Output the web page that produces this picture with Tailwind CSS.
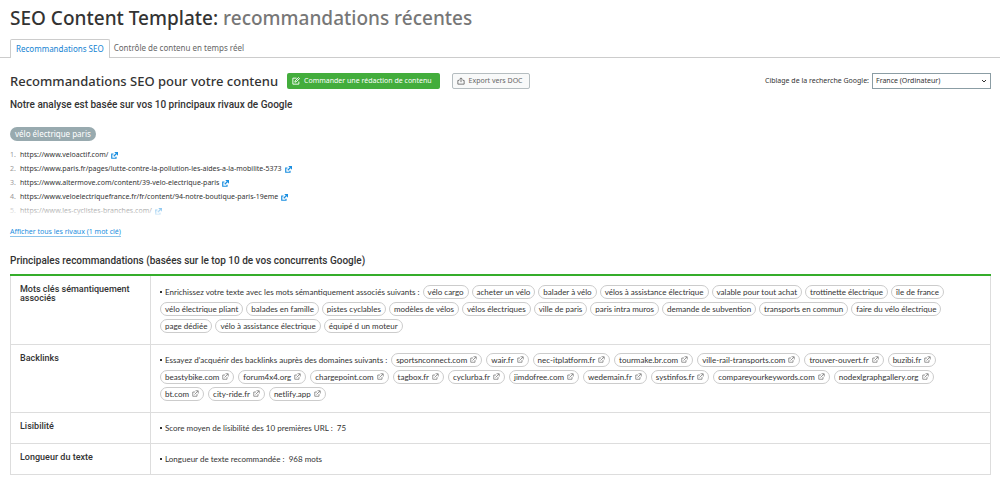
<!DOCTYPE html>
<html lang="fr">
<head>
    <meta charset="UTF-8">
    <meta name="viewport" content="width=device-width, initial-scale=1.0">
    <title>SEO Content Template</title>
    <script src="https://cdn.jsdelivr.net/npm/@tailwindcss/browser@4"></script>
</head>
<body class="bg-white text-[#333] font-['Noto_Sans','Open_Sans',sans-serif] text-[8px] leading-[14px]">
    <!-- Shared icons -->
    <svg class="hidden">
        <symbol id="external" viewBox="0 0 14 14">
            <path d="M6 4H1.5v8.5H10V8M5 9l7-7M7 1.5h5.5V7" fill="none" stroke="currentColor" stroke-width="1.5"/>
        </symbol>
        <symbol id="external-bold" viewBox="0 0 14 14">
            <path d="M5 4H1.5v8.5H10V9.5M5.5 8.5l5-5" fill="none" stroke="currentColor" stroke-width="2.4"/>
            <path d="M6.5 0H14v7.5z" fill="currentColor"/>
        </symbol>
    </svg>

    <header>
        <h1 class="px-[10px] pt-[6px] text-[19px] leading-[24px] font-medium">SEO Content Template: <span class="text-[#777]">recommandations récentes</span></h1>
        <nav class="mt-[9px] flex border-b border-[#ccc] pl-[10px] leading-[17px]">
            <a href="#" class="-mb-px rounded-t-xs border border-b-0 border-[#ccc] bg-white px-[5px] pb-px text-[#1483d2]">Recommandations SEO</a>
            <a href="#" class="px-1 text-[#666]">Contrôle de contenu en temps réel</a>
        </nav>
    </header>

    <main class="px-[10px] pr-[9px] pt-[15px]">
        <div class="flex items-center">
            <h2 class="text-[13px] leading-[16px] font-medium">Recommandations SEO pour votre contenu</h2>
            <button type="button" class="ml-[9px] flex h-4 items-center gap-1 rounded-xs bg-[#43ad3c] pl-[5px] pr-2 text-[7px] text-white">
                <svg class="size-2" viewBox="0 0 14 14" fill="none" stroke="currentColor" stroke-width="1.6">
                    <path d="M8 2H1.5v10.5H12V8"/>
                    <path d="M5 9l.6-2.4L11.5 1l1.7 1.7-5.8 5.8z"/>
                </svg>
                Commander une rédaction de contenu
            </button>
            <button type="button" class="ml-3 flex h-4 items-center gap-1 rounded-xs border border-[#b5bdc0] bg-[#f8f9f9] px-1 pr-[6px] text-[7px] text-[#666]">
                <svg class="size-2" viewBox="0 0 14 14" fill="none" stroke="currentColor" stroke-width="1.5">
                    <path d="M4 6H1.5v6.5h11V6H10M7 9V2M4 4.5l3-3 3 3"/>
                </svg>
                Export vers DOC
            </button>
            <label for="target" class="ml-auto text-[7px]">Ciblage de la recherche Google:</label>
            <div class="relative ml-[3px]">
                <select id="target" class="block h-4 w-[119px] appearance-none border border-[#8b9da4] bg-white pl-[3px] text-[7px]">
                    <option>France (Ordinateur)</option>
                </select>
                <svg class="pointer-events-none absolute right-[5px] top-[6px] size-1" viewBox="0 0 8 8" fill="none" stroke="currentColor" stroke-width="2">
                    <path d="M0 2l4 4 4-4"/>
                </svg>
            </div>
        </div>

        <h3 class="mt-[9px] font-[Roboto,sans-serif] text-[10px] font-medium">Notre analyse est basée sur vos 10 principaux rivaux de Google</h3>
        <span class="mt-[15px] inline-block h-[14px] rounded-full bg-[#98aaaf] px-[5px] leading-[13px] text-white">vélo électrique paris</span>

        <div class="relative mt-[7px]">
            <ol class="text-[7px]">
                <li class="flex"><span class="w-[10px] text-[#999]">1.</span><a href="#" class="flex items-center gap-[3px]">https://www.veloactif.com/ <svg class="size-[7px] text-[#1a8ee0]"><use href="#external-bold"/></svg></a></li>
                <li class="flex"><span class="w-[10px] text-[#999]">2.</span><a href="#" class="flex items-center gap-[3px]">https://www.paris.fr/pages/lutte-contre-la-pollution-les-aides-a-la-mobilite-5373 <svg class="size-[7px] text-[#1a8ee0]"><use href="#external-bold"/></svg></a></li>
                <li class="flex"><span class="w-[10px] text-[#999]">3.</span><a href="#" class="flex items-center gap-[3px]">https://www.altermove.com/content/39-velo-electrique-paris <svg class="size-[7px] text-[#1a8ee0]"><use href="#external-bold"/></svg></a></li>
                <li class="flex"><span class="w-[10px] text-[#999]">4.</span><a href="#" class="flex items-center gap-[3px]">https://www.veloelectriquefrance.fr/fr/content/94-notre-boutique-paris-19eme <svg class="size-[7px] text-[#1a8ee0]"><use href="#external-bold"/></svg></a></li>
                <li class="flex"><span class="w-[10px] text-[#999]">5.</span><a href="#" class="flex items-center gap-[3px]">https://www.les-cyclistes-branches.com/ <svg class="size-[7px] text-[#1a8ee0]"><use href="#external-bold"/></svg></a></li>
            </ol>
            <!-- Fade over the last rival -->
            <div class="pointer-events-none absolute inset-x-0 bottom-0 h-4 bg-linear-to-b from-white/20 to-white"></div>
        </div>
        <a href="#" class="mt-[9px] inline-block border-b border-[#8cc4ea] text-[7px] leading-[9px] text-[#1a8ee0]">Afficher tous les rivaux (1 mot clé)</a>

        <h3 class="mt-4 font-[Roboto,sans-serif] text-[10px] font-medium">Principales recommandations (basées sur le top 10 de vos concurrents Google)</h3>
        <table class="mt-[6px] w-full border-collapse border border-t-2 border-[#ddd] border-t-[#35ad2b] text-left align-top">
            <tr class="h-[69px] border-b border-[#ddd]">
                <th class="w-[140px] border-r border-[#ddd] px-[9px] pt-[9px] align-top font-[Roboto,sans-serif] text-[9px] leading-[9px] font-medium">Mots clés sémantiquement associés</th>
                <td class="pt-[9px] pl-[9px] pr-4 align-top font-[Lato,'Noto_Sans',sans-serif]">
                    <ul class="flex flex-wrap gap-x-[3px] gap-y-[3px]">
                        <li class="flex items-center gap-[3px]"><span class="size-[2px] bg-[#333]"></span>Enrichissez votre texte avec les mots sémantiquement associés suivants :</li>
                        <li class="rounded-full border border-[#ccc] px-1 leading-[12px]">vélo cargo</li>
                        <li class="rounded-full border border-[#ccc] px-1 leading-[12px]">acheter un vélo</li>
                        <li class="rounded-full border border-[#ccc] px-1 leading-[12px]">balader à vélo</li>
                        <li class="rounded-full border border-[#ccc] px-1 leading-[12px]">vélos à assistance électrique</li>
                        <li class="rounded-full border border-[#ccc] px-1 leading-[12px]">valable pour tout achat</li>
                        <li class="rounded-full border border-[#ccc] px-1 leading-[12px]">trottinette électrique</li>
                        <li class="rounded-full border border-[#ccc] px-1 leading-[12px]">île de france</li>
                        <li class="rounded-full border border-[#ccc] px-1 leading-[12px]">vélo électrique pliant</li>
                        <li class="rounded-full border border-[#ccc] px-1 leading-[12px]">balades en famille</li>
                        <li class="rounded-full border border-[#ccc] px-1 leading-[12px]">pistes cyclables</li>
                        <li class="rounded-full border border-[#ccc] px-1 leading-[12px]">modèles de vélos</li>
                        <li class="rounded-full border border-[#ccc] px-1 leading-[12px]">vélos électriques</li>
                        <li class="rounded-full border border-[#ccc] px-1 leading-[12px]">ville de paris</li>
                        <li class="rounded-full border border-[#ccc] px-1 leading-[12px]">paris intra muros</li>
                        <li class="rounded-full border border-[#ccc] px-1 leading-[12px]">demande de subvention</li>
                        <li class="rounded-full border border-[#ccc] px-1 leading-[12px]">transports en commun</li>
                        <li class="rounded-full border border-[#ccc] px-1 leading-[12px]">faire du vélo électrique</li>
                        <li class="rounded-full border border-[#ccc] px-1 leading-[12px]">page dédiée</li>
                        <li class="rounded-full border border-[#ccc] px-1 leading-[12px]">vélo à assistance électrique</li>
                        <li class="rounded-full border border-[#ccc] px-1 leading-[12px]">équipé d un moteur</li>
                    </ul>
                </td>
            </tr>
            <tr class="h-[68px] border-b border-[#ddd]">
                <th class="border-r border-[#ddd] px-[9px] pt-[8px] align-top font-[Roboto,sans-serif] text-[9px] leading-[11px] font-medium">Backlinks</th>
                <td class="py-[8px] pl-[9px] pr-4 align-top font-[Lato,'Noto_Sans',sans-serif]">
                    <ul class="flex flex-wrap gap-x-1 gap-y-[3px]">
                        <li class="flex items-center gap-[3px]"><span class="size-[2px] bg-[#333]"></span>Essayez d'acquérir des backlinks auprès des domaines suivants :</li>
                        <li><a href="#" class="flex items-center gap-[3px] rounded-full border border-[#ccc] px-1 leading-[12px]">sportsnconnect.com <svg class="size-[7px] text-[#777]"><use href="#external"/></svg></a></li>
                        <li><a href="#" class="flex items-center gap-[3px] rounded-full border border-[#ccc] px-1 leading-[12px]">wair.fr <svg class="size-[7px] text-[#777]"><use href="#external"/></svg></a></li>
                        <li><a href="#" class="flex items-center gap-[3px] rounded-full border border-[#ccc] px-1 leading-[12px]">nec-itplatform.fr <svg class="size-[7px] text-[#777]"><use href="#external"/></svg></a></li>
                        <li><a href="#" class="flex items-center gap-[3px] rounded-full border border-[#ccc] px-1 leading-[12px]">tourmake.br.com <svg class="size-[7px] text-[#777]"><use href="#external"/></svg></a></li>
                        <li><a href="#" class="flex items-center gap-[3px] rounded-full border border-[#ccc] px-1 leading-[12px]">ville-rail-transports.com <svg class="size-[7px] text-[#777]"><use href="#external"/></svg></a></li>
                        <li><a href="#" class="flex items-center gap-[3px] rounded-full border border-[#ccc] px-1 leading-[12px]">trouver-ouvert.fr <svg class="size-[7px] text-[#777]"><use href="#external"/></svg></a></li>
                        <li><a href="#" class="flex items-center gap-[3px] rounded-full border border-[#ccc] px-1 leading-[12px]">buzibi.fr <svg class="size-[7px] text-[#777]"><use href="#external"/></svg></a></li>
                        <li><a href="#" class="flex items-center gap-[3px] rounded-full border border-[#ccc] px-1 leading-[12px]">beastybike.com <svg class="size-[7px] text-[#777]"><use href="#external"/></svg></a></li>
                        <li><a href="#" class="flex items-center gap-[3px] rounded-full border border-[#ccc] px-1 leading-[12px]">forum4x4.org <svg class="size-[7px] text-[#777]"><use href="#external"/></svg></a></li>
                        <li><a href="#" class="flex items-center gap-[3px] rounded-full border border-[#ccc] px-1 leading-[12px]">chargepoint.com <svg class="size-[7px] text-[#777]"><use href="#external"/></svg></a></li>
                        <li><a href="#" class="flex items-center gap-[3px] rounded-full border border-[#ccc] px-1 leading-[12px]">tagbox.fr <svg class="size-[7px] text-[#777]"><use href="#external"/></svg></a></li>
                        <li><a href="#" class="flex items-center gap-[3px] rounded-full border border-[#ccc] px-1 leading-[12px]">cyclurba.fr <svg class="size-[7px] text-[#777]"><use href="#external"/></svg></a></li>
                        <li><a href="#" class="flex items-center gap-[3px] rounded-full border border-[#ccc] px-1 leading-[12px]">jimdofree.com <svg class="size-[7px] text-[#777]"><use href="#external"/></svg></a></li>
                        <li><a href="#" class="flex items-center gap-[3px] rounded-full border border-[#ccc] px-1 leading-[12px]">wedemain.fr <svg class="size-[7px] text-[#777]"><use href="#external"/></svg></a></li>
                        <li><a href="#" class="flex items-center gap-[3px] rounded-full border border-[#ccc] px-1 leading-[12px]">systinfos.fr <svg class="size-[7px] text-[#777]"><use href="#external"/></svg></a></li>
                        <li><a href="#" class="flex items-center gap-[3px] rounded-full border border-[#ccc] px-1 leading-[12px]">compareyourkeywords.com <svg class="size-[7px] text-[#777]"><use href="#external"/></svg></a></li>
                        <li><a href="#" class="flex items-center gap-[3px] rounded-full border border-[#ccc] px-1 leading-[12px]">nodexlgraphgallery.org <svg class="size-[7px] text-[#777]"><use href="#external"/></svg></a></li>
                        <li><a href="#" class="flex items-center gap-[3px] rounded-full border border-[#ccc] px-1 leading-[12px]">bt.com <svg class="size-[7px] text-[#777]"><use href="#external"/></svg></a></li>
                        <li><a href="#" class="flex items-center gap-[3px] rounded-full border border-[#ccc] px-1 leading-[12px]">city-ride.fr <svg class="size-[7px] text-[#777]"><use href="#external"/></svg></a></li>
                        <li><a href="#" class="flex items-center gap-[3px] rounded-full border border-[#ccc] px-1 leading-[12px]">netlify.app <svg class="size-[7px] text-[#777]"><use href="#external"/></svg></a></li>
                    </ul>
                </td>
            </tr>
            <tr class="h-[31px] border-b border-[#ddd]">
                <th class="border-r border-[#ddd] px-[9px] pt-[8px] align-top font-[Roboto,sans-serif] text-[9px] leading-[11px] font-medium">Lisibilité</th>
                <td class="pl-[9px] pr-4 pt-[8px] align-top font-[Lato,'Noto_Sans',sans-serif]">
                    <div class="flex items-center gap-[3px]"><span class="size-[2px] bg-[#333]"></span>Score moyen de lisibilité des 10 premières URL : &nbsp;75</div>
                </td>
            </tr>
            <tr class="h-[31px]">
                <th class="border-r border-[#ddd] px-[9px] pt-[8px] align-top font-[Roboto,sans-serif] text-[9px] leading-[11px] font-medium">Longueur du texte</th>
                <td class="pl-[9px] pr-4 pt-[8px] align-top font-[Lato,'Noto_Sans',sans-serif]">
                    <div class="flex items-center gap-[3px]"><span class="size-[2px] bg-[#333]"></span>Longueur de texte recommandée : &nbsp;968 mots</div>
                </td>
            </tr>
        </table>
    </main>
</body>
</html>
